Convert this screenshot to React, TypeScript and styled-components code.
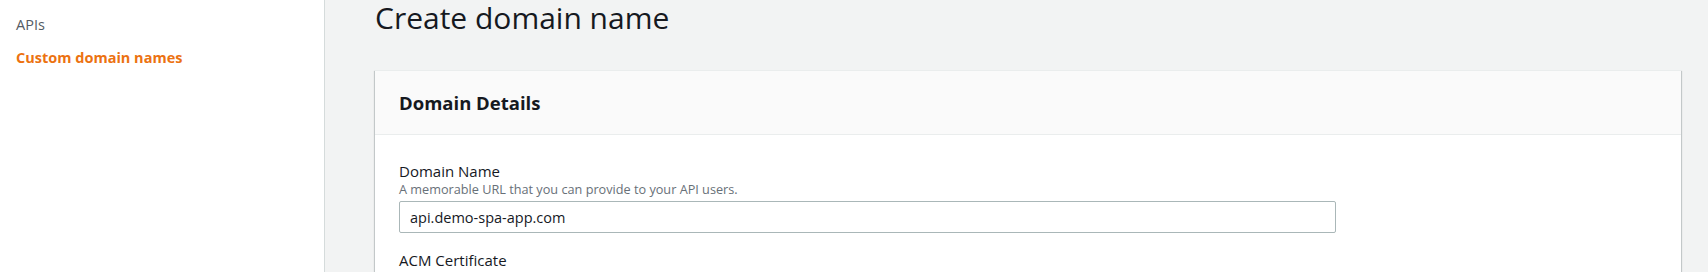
import React from 'react';
import styled, { createGlobalStyle } from 'styled-components';

const GlobalStyle = createGlobalStyle`
  html, body {
    margin: 0;
    padding: 0;
    background: #f2f3f3;
  }
  body {
    font-family: 'Open Sans', 'Liberation Sans', Arial, sans-serif;
    color: #16191f;
  }
`;

const Layout = styled.div`
  display: flex;
  height: 272px;
  overflow: hidden;
`;

const Sidebar = styled.nav`
  width: 325px;
  flex-shrink: 0;
  background: #ffffff;
  border-right: 1px solid #d5dbdb;
  padding: 14px 0 0 16px;
  box-sizing: border-box;
`;

const NavItem = styled.div<{ active?: boolean }>`
  font-size: 14.5px;
  line-height: 22px;
  margin-bottom: 11px;
  font-weight: ${(p) => (p.active ? 700 : 400)};
  color: ${(p) => (p.active ? '#ec7211' : '#545b64')};
  cursor: pointer;
`;

const Main = styled.main`
  flex: 1;
  padding: 0 27px 0 50px;
  background: #f2f3f3;
`;

const Title = styled.h1`
  margin: 0;
  font-size: 30px;
  font-weight: 400;
  line-height: 36px;
  color: #16191f;
`;

const Card = styled.section`
  margin-top: 34px;
  background: #ffffff;
  border-top: 1px solid #eaeded;
  box-shadow: 0 1px 1px 0 rgba(0, 28, 36, 0.3), 1px 1px 1px 0 rgba(0, 28, 36, 0.15),
    -1px 1px 1px 0 rgba(0, 28, 36, 0.15);
`;

const CardHeader = styled.div`
  background: #fafafa;
  border-bottom: 1px solid #eaeded;
  padding: 0 24px;
  height: 64px;
  box-sizing: border-box;
  display: flex;
  align-items: center;
`;

const CardTitle = styled.h2`
  margin: 0;
  font-size: 18.5px;
  font-weight: 700;
  line-height: 24px;
  color: #16191f;
`;

const CardBody = styled.div`
  padding: 26px 24px 24px;
`;

const Field = styled.div`
  margin-bottom: 17px;
`;

const Label = styled.div`
  font-size: 15px;
  line-height: 20px;
  color: #16191f;
`;

const Description = styled.div`
  font-size: 12.7px;
  line-height: 16px;
  color: #687078;
  margin-bottom: 4px;
`;

const TextInput = styled.input`
  width: 937px;
  height: 32px;
  box-sizing: border-box;
  border: 1px solid #aab7b8;
  border-radius: 2px;
  padding: 4px 10px;
  font-family: 'Open Sans', 'Liberation Sans', Arial, sans-serif;
  font-size: 14.5px;
  color: #16191f;
  background: #ffffff;
  outline: none;
`;

export default function App() {
  return (
    <>
      <GlobalStyle />
      <Layout>
        <Sidebar>
          <NavItem>APIs</NavItem>
          <NavItem active>Custom domain names</NavItem>
        </Sidebar>
        <Main>
          <Title>Create domain name</Title>
          <Card>
            <CardHeader>
              <CardTitle>Domain Details</CardTitle>
            </CardHeader>
            <CardBody>
              <Field>
                <Label>Domain Name</Label>
                <Description>A memorable URL that you can provide to your API users.</Description>
                <TextInput defaultValue="api.demo-spa-app.com" />
              </Field>
              <Field>
                <Label>ACM Certificate</Label>
              </Field>
            </CardBody>
          </Card>
        </Main>
      </Layout>
    </>
  );
}
